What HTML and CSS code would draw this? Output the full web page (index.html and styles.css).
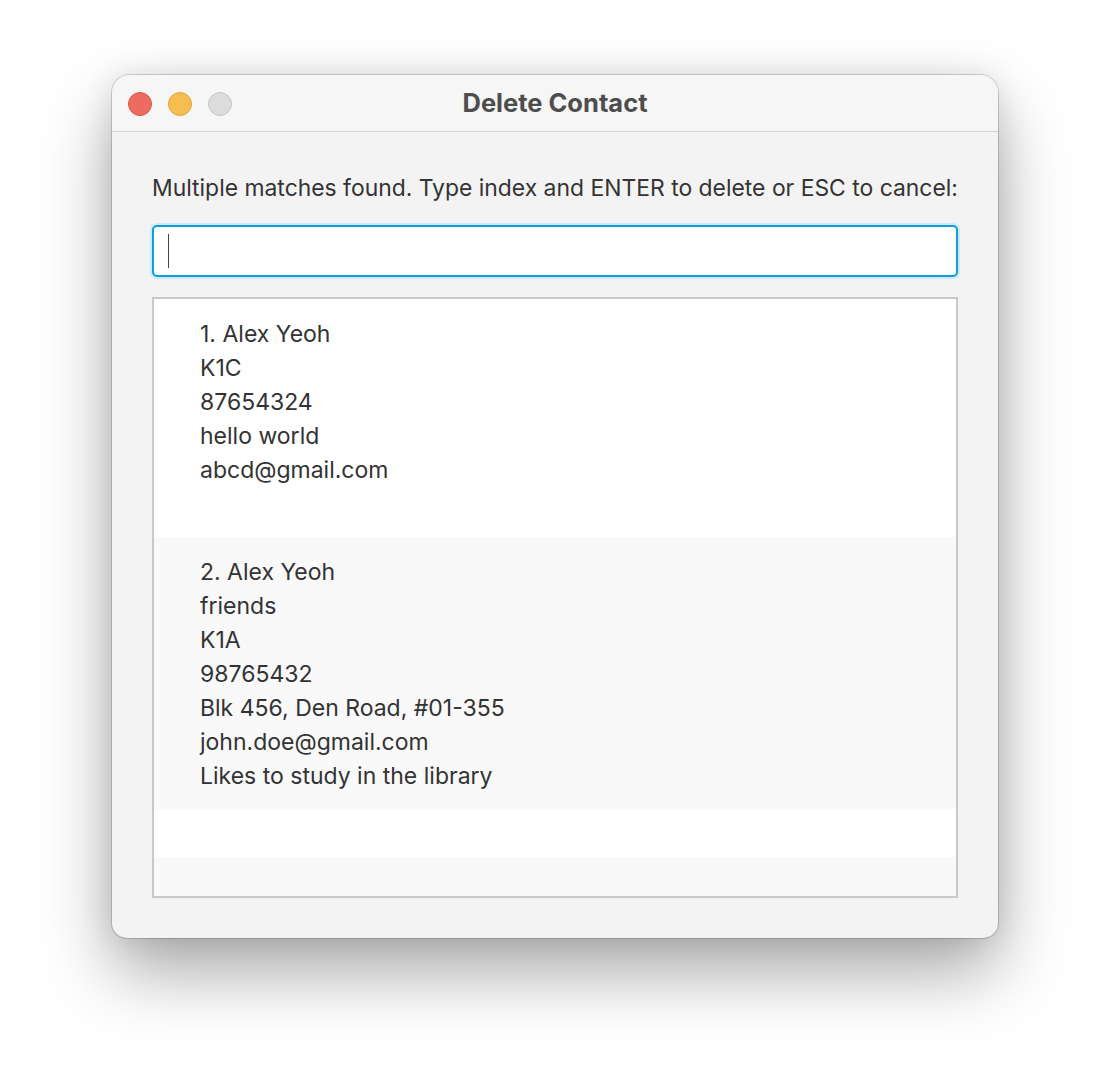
FILE: index.html
```html
<!DOCTYPE html>
<html>
<head>
<meta charset="utf-8">
<link rel="stylesheet" href="styles.css">
</head>
<body>
<div class="window">
  <div class="titlebar">
    <div class="lights">
      <span class="light red"></span>
      <span class="light yellow"></span>
      <span class="light gray"></span>
    </div>
    <div class="title">Delete Contact</div>
  </div>
  <div class="content">
    <div class="prompt">Multiple matches found. Type index and ENTER to delete or ESC to cancel:</div>
    <div class="input"><span class="caret"></span></div>
    <div class="list">
      <div class="cell">
        <div class="line">1. Alex Yeoh</div>
        <div class="line">K1C</div>
        <div class="line">87654324</div>
        <div class="line">hello world</div>
        <div class="line">abcd@gmail.com</div>
        <div class="line">&nbsp;</div>
      </div>
      <div class="cell odd">
        <div class="line">2. Alex Yeoh</div>
        <div class="line">friends</div>
        <div class="line">K1A</div>
        <div class="line">98765432</div>
        <div class="line">Blk 456, Den Road, #01-355</div>
        <div class="line">john.doe@gmail.com</div>
        <div class="line">Likes to study in the library</div>
      </div>
      <div class="cell empty"></div>
      <div class="cell empty odd"></div>
    </div>
  </div>
</div>
</body>
</html>
```
FILE: styles.css
```css
html, body {
  margin: 0;
  background: #ffffff;
}
body {
  padding: 75px 0 150px 112px;
  font-family: Inter, "Noto Sans", sans-serif;
}
.window {
  width: 886px;
  height: 863px;
  box-sizing: border-box;
  background: #f3f3f3;
  border-radius: 18px 18px 15px 15px;
  box-shadow: 0 0 0 1px rgba(0,0,0,0.16), 0 34px 70px rgba(0,0,0,0.34), 0 0 30px rgba(0,0,0,0.10);
  overflow: hidden;
  display: flex;
  flex-direction: column;
}
.titlebar {
  flex: 0 0 57px;
  box-sizing: border-box;
  background: #f6f6f6;
  border-bottom: 1px solid #d2d2d2;
  position: relative;
  display: flex;
  align-items: center;
  justify-content: center;
}
.lights {
  position: absolute;
  left: 16px;
  top: 17px;
  display: flex;
  gap: 16px;
}
.light {
  width: 24px;
  height: 24px;
  border-radius: 50%;
  box-sizing: border-box;
}
.red { background: #ee6b60; border: 1px solid #d8574c; }
.yellow { background: #f6be50; border: 1px solid #dea63a; }
.gray { background: #dcdcdc; border: 1px solid #c6c6c6; }
.title {
  font-size: 25.5px;
  font-weight: 700;
  color: #4d4d4d;
  margin-top: -2px;
}
.content {
  flex: 1 1 auto;
  min-height: 0;
  padding: 43px 40px 40px 40px;
  display: flex;
  flex-direction: column;
}
.prompt {
  flex: 0 0 auto;
  font-size: 22.9px;
  line-height: 26px;
  color: #333333;
  white-space: nowrap;
}
.input {
  flex: 0 0 52px;
  margin-top: 24px;
  box-sizing: border-box;
  background: #ffffff;
  border: 2px solid #0a9fd9;
  border-radius: 5px;
  box-shadow: 0 0 0 2px #cfe9f6;
  position: relative;
}
.caret {
  position: absolute;
  left: 14px;
  top: 7px;
  width: 1px;
  height: 34px;
  background: #444;
}
.list {
  margin-top: 20px;
  flex: 1 1 auto;
  min-height: 0;
  border: 2px solid #c9c9c9;
  background: #f8f8f8;
  overflow: hidden;
}
.cell {
  background: #ffffff;
  padding: 18px 46px 16px;
}
.cell.odd {
  background: #f9f9f9;
}
.cell.empty {
  height: 48px;
  padding: 0;
}
.line {
  font-size: 23px;
  line-height: 34px;
  color: #333333;
  white-space: nowrap;
}
```
